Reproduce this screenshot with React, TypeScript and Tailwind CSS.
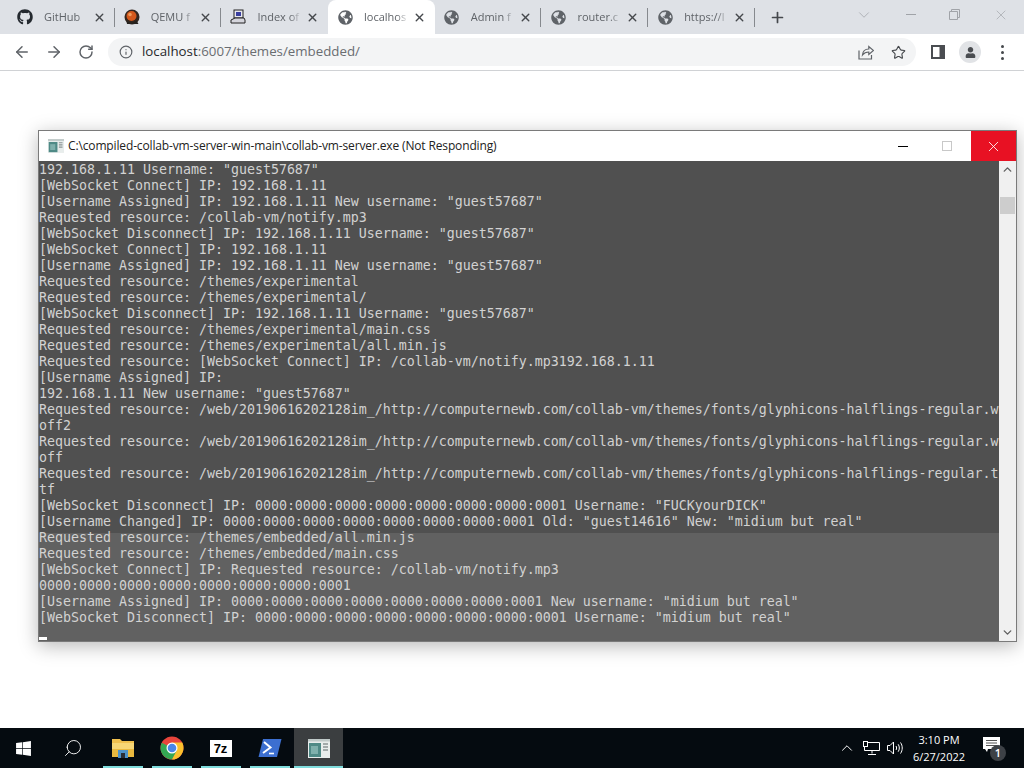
import { ArrowLeft, ArrowRight, ChevronDown, ChevronUp, Info, Plus, RotateCw, Search, Star, X } from "lucide-react";
import type { ReactNode } from "react";
import { FaGithub, FaGlobeAmericas, FaUser, FaWindows } from "react-icons/fa";

const LOG_LINES = [
  '192.168.1.11 Username: "guest57687"',
  "[WebSocket Connect] IP: 192.168.1.11",
  '[Username Assigned] IP: 192.168.1.11 New username: "guest57687"',
  "Requested resource: /collab-vm/notify.mp3",
  '[WebSocket Disconnect] IP: 192.168.1.11 Username: "guest57687"',
  "[WebSocket Connect] IP: 192.168.1.11",
  '[Username Assigned] IP: 192.168.1.11 New username: "guest57687"',
  "Requested resource: /themes/experimental",
  "Requested resource: /themes/experimental/",
  '[WebSocket Disconnect] IP: 192.168.1.11 Username: "guest57687"',
  "Requested resource: /themes/experimental/main.css",
  "Requested resource: /themes/experimental/all.min.js",
  "Requested resource: [WebSocket Connect] IP: /collab-vm/notify.mp3192.168.1.11",
  "[Username Assigned] IP:",
  '192.168.1.11 New username: "guest57687"',
  "Requested resource: /web/20190616202128im_/http://computernewb.com/collab-vm/themes/fonts/glyphicons-halflings-regular.w",
  "off2",
  "Requested resource: /web/20190616202128im_/http://computernewb.com/collab-vm/themes/fonts/glyphicons-halflings-regular.w",
  "off",
  "Requested resource: /web/20190616202128im_/http://computernewb.com/collab-vm/themes/fonts/glyphicons-halflings-regular.t",
  "tf",
  '[WebSocket Disconnect] IP: 0000:0000:0000:0000:0000:0000:0000:0001 Username: "FUCKyourDICK"',
  '[Username Changed] IP: 0000:0000:0000:0000:0000:0000:0000:0001 Old: "guest14616" New: "midium but real"',
  "Requested resource: /themes/embedded/all.min.js",
  "Requested resource: /themes/embedded/main.css",
  "[WebSocket Connect] IP: Requested resource: /collab-vm/notify.mp3",
  "0000:0000:0000:0000:0000:0000:0000:0001",
  '[Username Assigned] IP: 0000:0000:0000:0000:0000:0000:0000:0001 New username: "midium but real"',
  '[WebSocket Disconnect] IP: 0000:0000:0000:0000:0000:0000:0000:0001 Username: "midium but real"',
];

const globe = <FaGlobeAmericas className="text-[#5f6368]" size={15} />;

const QemuIcon = () => (
  <svg width="16" height="16" viewBox="0 0 16 16">
    <circle cx="8" cy="8" r="7.500" fill="#33261f" />
    <circle cx="7.500" cy="7" r="5" fill="#d4581c" />
    <circle cx="6" cy="5.500" r="1.800" fill="#ee9a5a" />
    <path d="M2.500 12c3 2.200 7 2.200 10-.5l2 3.500H3z" fill="#26221f" />
  </svg>
);

const IndexIcon = () => (
  <svg width="16" height="16" viewBox="0 0 16 16">
    <rect x="4" y="1" width="9" height="8" fill="#e8e8ee" stroke="#222" />
    <rect x="6" y="3" width="5" height="4" fill="#3a3fa0" />
    <path d="M1 11l4-2h9l1 2v3H1z" fill="#d5d5dc" stroke="#222" />
  </svg>
);

const TABS: { title: string; icon: ReactNode; active?: boolean }[] = [
  { title: "GitHub", icon: <FaGithub className="text-[#24292f]" size={16} /> },
  { title: "QEMU f", icon: <QemuIcon /> },
  { title: "Index of", icon: <IndexIcon /> },
  { title: "localhos", icon: globe, active: true },
  { title: "Admin f", icon: globe },
  { title: "router.c", icon: globe },
  { title: "https://l", icon: globe },
];

const Tab = ({ title, icon, active, divider }: { title: string; icon: ReactNode; active?: boolean; divider: boolean }) => (
  <div className={`relative flex h-full w-[106.7px] shrink-0 items-center pl-[9px] pr-[9px] ${active ? "rounded-t-lg bg-white" : ""}`}>
    <span className="flex w-4 shrink-0 justify-center">{icon}</span>
    <span className="ml-[11px] w-[45px] whitespace-nowrap text-[11px] text-[#5f6368] [mask-image:linear-gradient(to_right,black_72%,transparent)]">
      {title}
    </span>
    <X className="ml-[4px] shrink-0 text-[#45484c]" size={13} strokeWidth={2.6} />
    {divider && <span className="absolute right-0 top-[8px] h-[19px] w-px bg-[#86898e]" />}
  </div>
);

const ShareIcon = () => (
  <svg width="16" height="16" viewBox="0 0 16 16" fill="none" stroke="#5f6368" strokeWidth="1.2">
    <path d="M1 6.500v8.500h12.500v-4" />
    <path d="M4.500 11c.3-3.600 2.800-6 6.300-6V2.500L15.500 6.500l-4.700 4V8c-2.500 0-4.700.9-6.300 3z" />
  </svg>
);

const SidePanelIcon = () => (
  <svg width="14" height="14" viewBox="0 0 14 14">
    <rect x="0" y="0" width="14" height="14" fill="#4a4d51" />
    <rect x="2" y="2" width="6.500" height="10" fill="#fff" />
  </svg>
);

const FolderIcon = () => (
  <svg width="22" height="20" viewBox="0 0 22 20">
    <path d="M0 1h8l2 2h12v16H0z" fill="#f0c04e" />
    <rect x="0" y="5" width="22" height="14" fill="#f7d675" />
    <rect x="0" y="11" width="22" height="8" fill="#e9b93f" />
    <rect x="6" y="12" width="10" height="8" fill="#4e93c9" />
    <rect x="9" y="15" width="4" height="5" fill="#2b2f36" />
  </svg>
);

const ChromeIcon = () => (
  <svg width="24" height="24" viewBox="0 0 24 24">
    <circle cx="12" cy="12" r="11.500" fill="#e8453c" />
    <path d="M12 12L1.800 6.700A11.500 11.500 0 0 0 12 23.500l5.500-9z" fill="#34a853" />
    <path d="M12 6.500h10.300a11.500 11.500 0 0 1 1.200 5.500 11.500 11.500 0 0 1-11.500 11.500L17 14z" fill="#fbc02d" />
    <circle cx="12" cy="12" r="5.500" fill="#fff" />
    <circle cx="12" cy="12" r="4.300" fill="#4a86e8" />
  </svg>
);

const PowerShellIcon = () => (
  <svg width="24" height="20" viewBox="0 0 24 20">
    <path d="M5 1h18.500L19 19H0.500z" fill="#3c6fd0" />
    <path d="M6 4l6.500 5.500L5 15" fill="none" stroke="#fff" strokeWidth="2" />
    <path d="M11 15.500h5" stroke="#fff" strokeWidth="1.600" />
  </svg>
);

const ConsoleIcon = ({ small }: { small?: boolean }) => (
  <svg width={small ? 16 : 22} height={small ? 14 : 19} viewBox="0 0 22 19">
    <rect width="22" height="19" fill="#e8edec" />
    <rect y="0" width="22" height="2.500" fill="#bfc9c8" />
    <rect x="1" y="4" width="12" height="14" fill="#4f8a86" />
    <rect x="3" y="7" width="7" height="8" fill="#7fb0ac" />
    <path d="M15 5h5M15 8h5M15 11h5" stroke="#8a9494" strokeWidth="1.500" />
  </svg>
);

const NetworkIcon = () => (
  <svg width="17" height="14" viewBox="0 0 17 14" fill="none" stroke="#fff" strokeWidth="1">
    <path d="M4.500 1.500H16.500V9.500H1.500V6" />
    <rect x="0.500" y="0.500" width="4" height="5" />
    <path d="M9 9.500v3M5 13.500h8" />
  </svg>
);

const VolumeIcon = () => (
  <svg width="17" height="14" viewBox="0 0 17 14" fill="none" stroke="#fff" strokeWidth="1">
    <path d="M0.500 4.500h2.500L6.500 1v12L3 9.500H0.500z" />
    <path d="M9 5c.8 1.200.8 2.800 0 4M11.200 3.300c1.500 2.200 1.500 5.200 0 7.400M13.500 1.500c2.300 3.200 2.300 7.800 0 11" />
  </svg>
);

const TaskButton = ({ children, active }: { children: ReactNode; active?: boolean }) => (
  <div className={`relative flex h-full w-[49px] items-center justify-center ${active ? "bg-[#3b3e40]" : ""}`}>
    {children}
    <span className={`absolute bottom-0 h-0.5 bg-[#7fdcdc] ${active ? "inset-x-0" : "left-[5px] right-[4px]"}`} />
  </div>
);

const App = () => {
  return (
    <div className="flex h-[768px] w-[1024px] flex-col overflow-hidden bg-white font-['Open_Sans',sans-serif]">
      <div className="flex h-[34px] shrink-0 items-end bg-[#dee1e6] pl-2">
        {TABS.map((tab, i) => (
          <Tab key={tab.title} {...tab} divider={!tab.active && i !== 2} />
        ))}
        <div className="flex h-full w-[46px] items-center justify-center">
          <Plus className="text-[#45484c]" size={17} strokeWidth={2.4} />
        </div>
        <div className="ml-auto flex h-full items-start pt-[7px] text-[#a0a3a8]">
          <ChevronDown size={18} strokeWidth={1} className="mr-[33px] -mt-px" />
          <span className="mr-[33px] mt-[7px] h-px w-[10px] bg-[#a0a3a8]" />
          <svg width="11" height="11" viewBox="0 0 11 11" fill="none" stroke="#a0a3a8" className="mr-[33px] mt-[2px]">
            <path d="M0.500 2.500h8v8h-8zM2.500 2.500v-2h8v8h-2" />
          </svg>
          <X size={16} strokeWidth={1} className="mr-[15px]" />
        </div>
      </div>

      <div className="flex h-[37px] shrink-0 items-center border-b border-[#d0d2d5] bg-white pl-[13px] pr-[13px]">
        <ArrowLeft className="text-[#5f6368]" size={18} strokeWidth={2} />
        <ArrowRight className="ml-[14px] text-[#5f6368]" size={18} strokeWidth={2} />
        <RotateCw className="ml-[15px] text-[#5f6368]" size={16} strokeWidth={2.2} />
        <div className="ml-[14px] flex h-7 w-[808px] items-center rounded-full bg-[#f3f4f5] pl-[11px] pr-[10px]">
          <Info className="text-[#5f6368]" size={14} strokeWidth={2} />
          <span className="ml-[9px] text-[13.3px] text-[#6a6d71]">
            <span className="text-[#26282b]">localhost</span>:6007/themes/embedded/
          </span>
          <span className="ml-auto flex items-center gap-[17px]">
            <ShareIcon />
            <Star className="text-[#45484c]" size={15} strokeWidth={1.8} />
          </span>
        </div>
        <span className="ml-[15px]"><SidePanelIcon /></span>
        <span className="ml-[14px] flex size-[22px] items-center justify-center rounded-full bg-[#e1e3e6]">
          <FaUser className="text-[#4a4d51]" size={11} />
        </span>
        <span className="ml-[20px] flex flex-col gap-[3px]">
          <span className="size-[3px] rounded-full bg-[#45484c]" />
          <span className="size-[3px] rounded-full bg-[#45484c]" />
          <span className="size-[3px] rounded-full bg-[#45484c]" />
        </span>
      </div>

      <main className="relative flex-1 bg-white">
        <div className="absolute left-[38px] top-[59px] flex h-[512px] w-[979px] flex-col border border-[#7a7a7a] bg-white shadow-[0_4px_18px_rgba(0,0,0,0.28)]">
          <div className="flex h-[30px] shrink-0 items-center pl-[9px]">
            <ConsoleIcon small />
            <span className="ml-[4px] text-[12px] tracking-[-0.14px] text-[#222]">
              C:\compiled-collab-vm-server-win-main\collab-vm-server.exe (Not Responding)
            </span>
            <span className="ml-auto mr-[34px] h-px w-[10px] bg-black" />
            <span className="mr-[19px] size-[10px] border border-[#c8c8c8]" />
            <span className="flex h-full w-[45px] items-center justify-center bg-[#e81123]">
              <X className="text-white" size={17} strokeWidth={1.2} />
            </span>
          </div>
          <div className="flex min-h-0 flex-1">
            <div className="min-w-0 flex-1 overflow-hidden bg-[linear-gradient(#505050_372px,#616161_372px)] pt-px font-['DejaVu_Sans_Mono',monospace] text-[13.29px] leading-4 text-[#d2d2d2]">
              {LOG_LINES.map((line, i) => (
                <div key={i} className="h-4 whitespace-pre">
                  {line}
                </div>
              ))}
              <div className="relative h-[15px]">
                <span className="absolute bottom-px left-0 h-[3px] w-2 bg-white" />
              </div>
            </div>
            <div className="flex w-[17px] shrink-0 flex-col items-center bg-[#f0f0f0]">
              <ChevronUp className="mt-[2px] text-[#606060]" size={13} strokeWidth={2.6} />
              <div className="mt-[21px] h-[17px] w-[15px] bg-[#cdcdcd]" />
              <ChevronDown className="mb-[2px] mt-auto text-[#606060]" size={13} strokeWidth={2.6} />
            </div>
          </div>
        </div>
      </main>

      <div className="flex h-10 shrink-0 items-center bg-[#050b10] text-white">
        <div className="flex h-full w-12 items-center justify-center pr-[1px]">
          <FaWindows size={17} />
        </div>
        <div className="mr-[1px] flex h-full w-[49px] items-center justify-center">
          <Search className="-scale-x-100" size={20} strokeWidth={1.100} />
        </div>
        <TaskButton><FolderIcon /></TaskButton>
        <TaskButton><ChromeIcon /></TaskButton>
        <TaskButton>
          <span className="flex h-[17px] w-[22px] items-center justify-center bg-white font-['Liberation_Sans',sans-serif] text-[13px] font-bold leading-none text-black">
            7z
          </span>
        </TaskButton>
        <TaskButton><PowerShellIcon /></TaskButton>
        <TaskButton active><ConsoleIcon /></TaskButton>
        <div className="ml-auto flex h-full items-center">
          <ChevronUp size={18} strokeWidth={1.300} />
          <span className="ml-[7px]"><NetworkIcon /></span>
          <span className="ml-[7px]"><VolumeIcon /></span>
          <div className="flex w-[70px] flex-col items-center text-[11px] leading-[17px]">
            <span>3:10 PM</span>
            <span>6/27/2022</span>
          </div>
          <div className="relative ml-[9px] mr-[24px] h-[22px] w-[17px]">
            <svg width="17" height="16" viewBox="0 0 17 16">
              <path d="M0 0h17v12H5l-1 3-2-3H0z" fill="#fff" />
              <path d="M3 3.500h11M3 6h11M3 8.500h11" stroke="#555" />
            </svg>
            <span className="absolute -right-1.5 bottom-[-2px] flex size-4 items-center justify-center rounded-full bg-[#3d4146] text-[11px] font-semibold text-white">
              1
            </span>
          </div>
        </div>
      </div>
    </div>
  );
};

export default App;
